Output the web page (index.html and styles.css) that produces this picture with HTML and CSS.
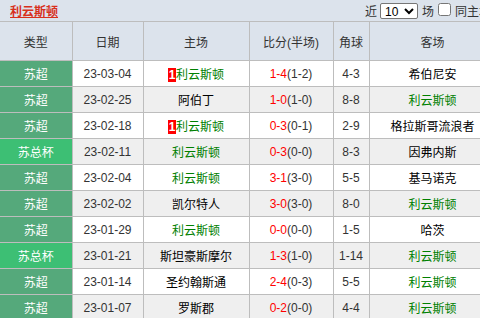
FILE: index.html
```html
<!DOCTYPE html>
<html lang="zh">
<head>
<meta charset="utf-8">
<link rel="stylesheet" href="styles.css">
</head>
<body>
<div class="wrap">
  <div class="topbar">
    <a class="title" href="#">利云斯顿</a>
    <div class="ctrls">
      <span>近</span>
      <select class="sel"><option>10</option></select>
      <span>场</span>
      <input type="checkbox" class="chk">
      <span>同主场</span>
    </div>
  </div>
  <table class="tbl">
    <colgroup>
      <col class="c1"><col class="c2"><col class="c3"><col class="c4"><col class="c5"><col class="c6">
    </colgroup>
    <thead>
      <tr><th>类型</th><th>日期</th><th>主场</th><th>比分(半场)</th><th>角球</th><th>客场</th></tr>
    </thead>
    <tbody>
      <tr class="odd"><td class="lg">苏超</td><td>23-03-04</td><td><span class="rc">1</span><span class="me">利云斯顿</span></td><td><span class="sc">1-4</span>(1-2)</td><td>4-3</td><td class="op">希伯尼安</td></tr>
      <tr class="even"><td class="lg">苏超</td><td>23-02-25</td><td class="op">阿伯丁</td><td><span class="sc">1-0</span>(1-0)</td><td>8-8</td><td class="me">利云斯顿</td></tr>
      <tr class="odd"><td class="lg">苏超</td><td>23-02-18</td><td><span class="rc">1</span><span class="me">利云斯顿</span></td><td><span class="sc">0-3</span>(0-1)</td><td>2-9</td><td class="op">格拉斯哥流浪者</td></tr>
      <tr class="even"><td class="lg cup">苏总杯</td><td>23-02-11</td><td class="me">利云斯顿</td><td><span class="sc">0-3</span>(0-0)</td><td>8-3</td><td class="op">因弗内斯</td></tr>
      <tr class="odd"><td class="lg">苏超</td><td>23-02-04</td><td class="me">利云斯顿</td><td><span class="sc">3-1</span>(3-0)</td><td>5-5</td><td class="op">基马诺克</td></tr>
      <tr class="even"><td class="lg">苏超</td><td>23-02-02</td><td class="op">凯尔特人</td><td><span class="sc">3-0</span>(3-0)</td><td>8-0</td><td class="me">利云斯顿</td></tr>
      <tr class="odd"><td class="lg">苏超</td><td>23-01-29</td><td class="me">利云斯顿</td><td><span class="sc">0-0</span>(0-0)</td><td>1-5</td><td class="op">哈茨</td></tr>
      <tr class="even"><td class="lg cup">苏总杯</td><td>23-01-21</td><td class="op">斯坦豪斯摩尔</td><td><span class="sc">1-3</span>(1-0)</td><td>1-14</td><td class="me">利云斯顿</td></tr>
      <tr class="odd"><td class="lg">苏超</td><td>23-01-14</td><td class="op">圣约翰斯通</td><td><span class="sc">2-4</span>(0-3)</td><td>5-5</td><td class="me">利云斯顿</td></tr>
      <tr class="even"><td class="lg">苏超</td><td>23-01-07</td><td class="op">罗斯郡</td><td><span class="sc">0-2</span>(0-0)</td><td>4-4</td><td class="me">利云斯顿</td></tr>
    </tbody>
  </table>
</div>
</body>
</html>
```
FILE: styles.css
```css
html, body {
  margin: 0;
  padding: 0;
  background: #dce3ec;
  overflow: hidden;
}
body {
  font-family: "Liberation Sans", "Noto Sans CJK SC", sans-serif;
  font-size: 12px;
  color: #333;
}
.wrap {
  width: 496px;
}
.topbar {
  height: 21px;
  display: flex;
  align-items: center;
  justify-content: space-between;
  padding: 0 5px 0 10px;
  box-sizing: border-box;
}
.title {
  color: #d8301c;
  font-weight: bold;
  font-size: 12px;
  text-decoration: underline;
}
.ctrls {
  display: flex;
  align-items: center;
  gap: 4px;
  color: #333;
  font-size: 12px;
}
.sel {
  width: 38px;
  height: 16px;
  font-size: 12px;
  font-family: "Liberation Sans", sans-serif;
  padding: 0;
  margin: 0 0 0 -1px;
  border: 1px solid #767676;
  border-radius: 2px;
  background: #fff;
  color: #000;
}
.chk {
  width: 13px;
  height: 13px;
  margin: 0 0 2px 0;
}
.tbl {
  width: 496px;
  border-collapse: collapse;
  table-layout: fixed;
}
.c1 { width: 72px; }
.c2 { width: 71px; }
.c3 { width: 106px; }
.c4 { width: 84px; }
.c5 { width: 36px; }
.c6 { width: 127px; }
.tbl th, .tbl td {
  border: 1px solid #bdbdbd;
  text-align: center;
  padding: 0;
  white-space: nowrap;
  overflow: hidden;
}
.tbl th:first-child, .tbl td:first-child {
  border-left: none;
}
.tbl th {
  height: 38px;
  font-weight: normal;
  background: #dce3ec;
  color: #333;
}
.tbl td {
  height: 25px;
}
.odd td { background: #fff; }
.even td { background: #efefef; }
.tbl td.lg {
  background: #55a97b;
  color: #fff;
}
.tbl td.cup {
  background: #3dbf74;
}
.me { color: #008000; }
.op { color: #000; }
.sc { color: #ff0000; }
.rc {
  display: inline-block;
  background: #ff0000;
  color: #fff;
  width: 8px;
  height: 14px;
  line-height: 14px;
  font-weight: bold;
  vertical-align: middle;
  margin-top: -2px;
}
```
